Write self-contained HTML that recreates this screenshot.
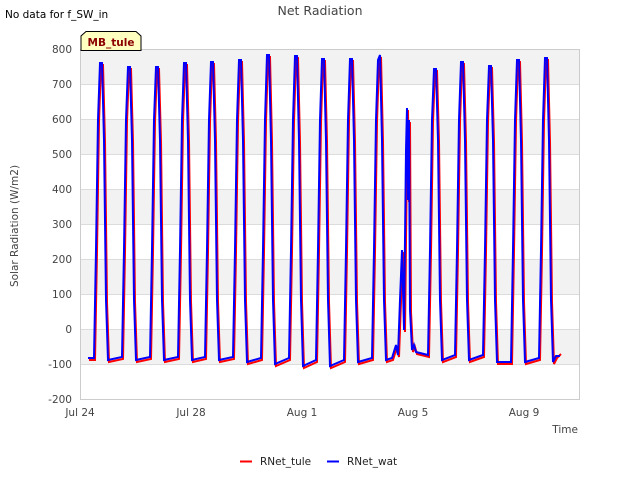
<!DOCTYPE html><html><head><style>body{margin:0;background:#fff}svg text{font-family:"DejaVu Sans","Liberation Sans",sans-serif}</style></head><body>
<svg width="640" height="480" viewBox="0 0 640 480" xmlns="http://www.w3.org/2000/svg">
<rect width="640" height="480" fill="#fff"/>
<text x="5" y="18" font-size="10.5" fill="#000">No data for f_SW_in</text>
<text x="320" y="15" font-size="12.5" fill="#444" text-anchor="middle">Net Radiation</text>
<g fill="#f2f2f2"><rect x="80" y="49" width="500" height="35"/><rect x="80" y="119" width="500" height="35"/><rect x="80" y="189" width="500" height="35"/><rect x="80" y="259" width="500" height="35"/><rect x="80" y="329" width="500" height="35"/></g>
<g stroke="#dcdcdc" stroke-width="1"><path d="M80 84.5H580M80 119.5H580M80 154.5H580M80 189.5H580M80 224.5H580M80 259.5H580M80 294.5H580M80 329.5H580M80 364.5H580"/></g>
<rect x="80.5" y="49.5" width="499" height="350" fill="none" stroke="#ccc"/>
<g font-size="10.5" fill="#444" text-anchor="end"><text x="72" y="53">800</text><text x="72" y="88">700</text><text x="72" y="123">600</text><text x="72" y="158">500</text><text x="72" y="193">400</text><text x="72" y="228">300</text><text x="72" y="263">200</text><text x="72" y="298">100</text><text x="72" y="333">0</text><text x="72" y="368">-100</text><text x="72" y="403">-200</text></g>
<g font-size="10.5" fill="#444" text-anchor="middle"><text x="80" y="416">Jul 24</text><text x="191" y="416">Jul 28</text><text x="302" y="416">Aug 1</text><text x="413" y="416">Aug 5</text><text x="524" y="416">Aug 9</text></g>
<text x="578" y="433" font-size="10.5" fill="#444" text-anchor="end">Time</text>
<text transform="translate(18,226) rotate(-90)" font-size="10.5" fill="#444" text-anchor="middle">Solar Radiation (W/m2)</text>
<path fill="none" stroke="#f00" stroke-width="2" transform="translate(1,2)" d="M88 358 94 358 96 250 98 120 100 63 102 63 104 140 106 300 108 360 122 357 124 250 126 120 128 67 130 67 132 140 134 300 136 360 150 357 152 250 154 120 156 67 158 67 160 140 162 300 164 360 178 357 180 250 182 120 184 63 186 63 188 140 190 300 192 360 205 357 207 250 209 120 211 62 213 62 215 140 217 300 219 360 233 357 235 250 237 120 239 60 241 60 243 140 245 300 247 362 261 358 263 250 265 120 267 55 269 55 271 140 273 300 275 364 289 358 291 250 293 120 295 56 297 56 299 140 301 300 303 366 316 360 318 250 320 120 322 59 324 59 326 140 328 300 330 366 344 360 346 250 348 120 350 59 352 59 354 140 356 300 358 362 372 358 374 250 376 120 378 60 380 55 382 140 384 300 386 360 392 358 396 345 398 355 400 300 402 250 404 330 406 150 407 108 408 200 409 120 410 310 412 350 414 345 416 352 428 355 430 250 432 120 434 69 436 69 438 140 440 300 442 360 455 355 457 250 459 120 461 62 463 62 465 140 467 300 469 360 483 355 485 250 487 120 489 66 491 66 493 140 495 300 497 362 511 362 513 250 515 120 517 60 519 60 521 140 523 300 525 362 539 358 541 250 543 120 545 58 547 58 549 140 551 300 553 362 556 356 560 352"/>
<path fill="none" stroke="#00f" stroke-width="2" d="M88 358 94 358 96 250 98 120 100 63 102 63 104 140 106 300 108 360 122 357 124 250 126 120 128 67 130 67 132 140 134 300 136 360 150 357 152 250 154 120 156 67 158 67 160 140 162 300 164 360 178 357 180 250 182 120 184 63 186 63 188 140 190 300 192 360 205 357 207 250 209 120 211 62 213 62 215 140 217 300 219 360 233 357 235 250 237 120 239 60 241 60 243 140 245 300 247 362 261 358 263 250 265 120 267 55 269 55 271 140 273 300 275 364 289 358 291 250 293 120 295 56 297 56 299 140 301 300 303 366 316 360 318 250 320 120 322 59 324 59 326 140 328 300 330 366 344 360 346 250 348 120 350 59 352 59 354 140 356 300 358 362 372 358 374 250 376 120 378 60 380 55 382 140 384 300 386 360 392 358 396 345 398 355 400 300 402 250 404 330 406 150 407 108 408 200 409 120 410 310 412 350 414 345 416 352 428 355 430 250 432 120 434 69 436 69 438 140 440 300 442 360 455 355 457 250 459 120 461 62 463 62 465 140 467 300 469 360 483 355 485 250 487 120 489 66 491 66 493 140 495 300 497 362 511 362 513 250 515 120 517 60 519 60 521 140 523 300 525 362 539 358 541 250 543 120 545 58 547 58 549 140 551 300 553 362 556 356 560 356"/>
<path d="M81 50.5V36L86 31.5H136L141 36V50.5Z" fill="#ffffc0" stroke="#000"/>
<text x="111" y="46" font-size="10.5" font-weight="bold" fill="#8b0000" text-anchor="middle">MB_tule</text>
<line x1="240" y1="461.5" x2="252" y2="461.5" stroke="#f00" stroke-width="2"/>
<text x="260" y="465" font-size="10.5" fill="#222">RNet_tule</text>
<line x1="327" y1="461.5" x2="339" y2="461.5" stroke="#00f" stroke-width="2"/>
<text x="347" y="465" font-size="10.5" fill="#222">RNet_wat</text>
</svg></body></html>
